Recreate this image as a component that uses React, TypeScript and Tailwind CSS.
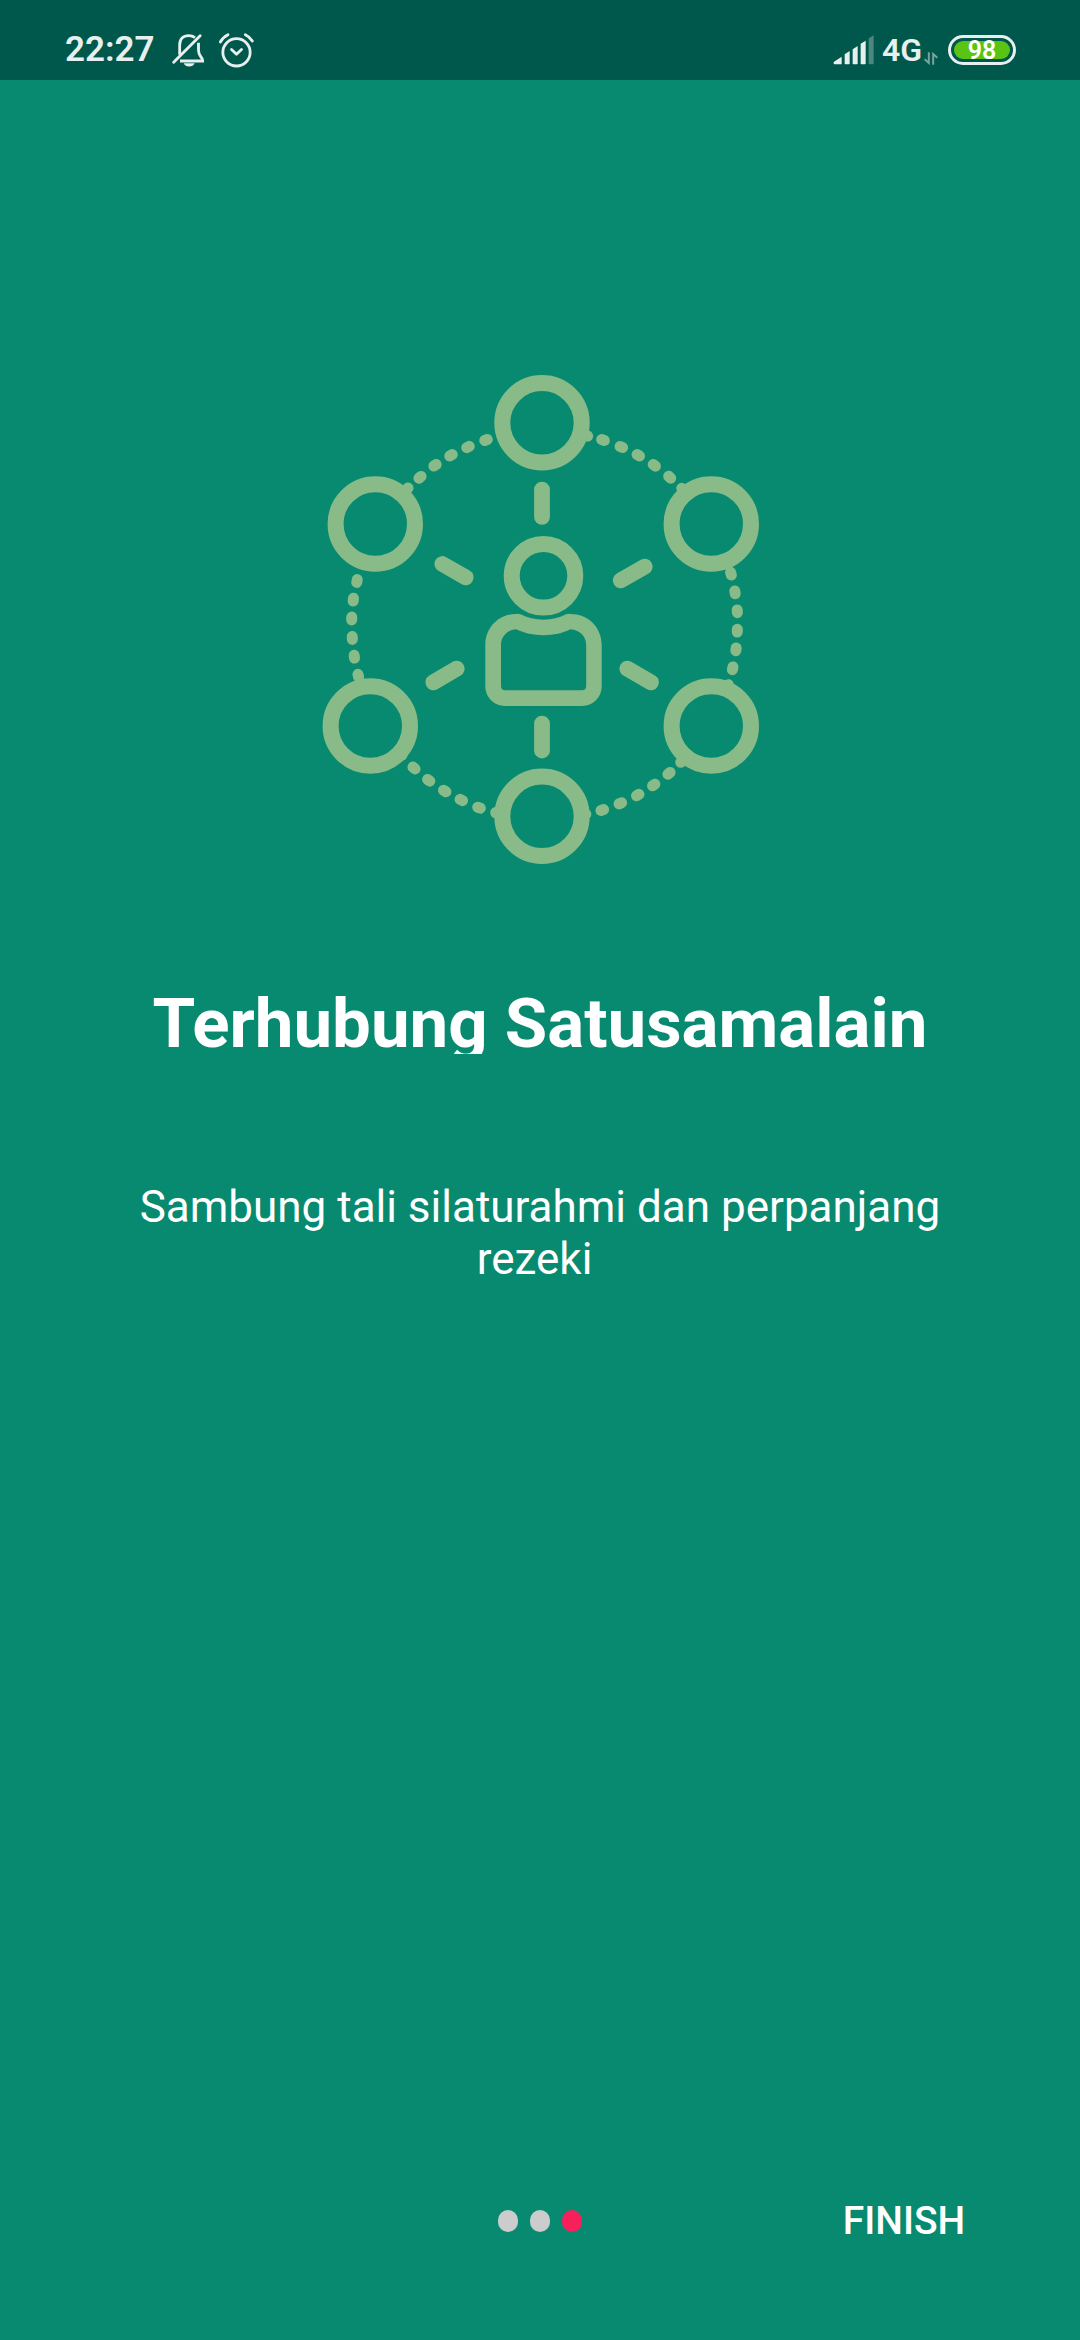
import React from "react";

type Dash = [x: number, y: number, angle: number];

const NODES: [number, number][] = [
  [542, 422.8],
  [375.3, 524],
  [711.3, 524],
  [370.3, 726],
  [711.3, 726],
  [542, 816.3],
];

const SPOKES: [number, number, number, number][] = [
  [542, 489.7, 542, 516.8],
  [542, 723.7, 542, 750.5],
  [442.3, 564, 465.7, 577.3],
  [620.7, 580.3, 644.7, 566.7],
  [433.3, 682.3, 456.7, 668.7],
  [627.3, 668.7, 651, 682.3],
];

const DASHES: Dash[] = [
  [486, 440, -20], [468, 447, -26], [451, 455.3, -30], [435, 465.3, -35], [420, 477.3, -40], [407, 489, -43],
  [586.3, 435.7, 17], [603, 440, 18], [621.3, 447, 24], [638.3, 455.3, 30], [654.3, 465.3, 37], [669.7, 477.3, 43], [682.7, 489.3, 45],
  [731, 573.7, 75], [735, 592.3, 81], [737.3, 611.3, 86], [737.3, 630.7, 91], [736, 649.3, 97], [732.7, 668.3, 102], [728, 686, 105],
  [681.7, 761.3, -45], [669, 773.3, -40], [653.7, 785, -35], [637.7, 795, -30], [620.3, 803.3, -24], [602.3, 810, -18], [584.5, 814.5, -14],
  [357, 581, 100], [353.3, 599.7, 96], [351.7, 618.5, 91], [352.3, 638, 87], [354.3, 656.7, 83], [358.3, 675.7, 77],
  [401, 754, 45], [414, 768, 41], [428.7, 780.3, 36], [444.7, 791, 32], [461.3, 800, 26], [479, 807.7, 20], [497, 813, 15],
];

function NetworkIllustration() {
  return (
    <svg viewBox="318 370 444 500" className="h-[500px] w-[444px]" fill="none" stroke="#88BB88" role="img" aria-label="Terhubung">
      {NODES.map(([x, y]) => (
        <circle key={`${x}-${y}`} cx={x} cy={y} r="39.7" strokeWidth="16" />
      ))}
      {SPOKES.map(([x1, y1, x2, y2]) => (
        <line key={`${x1}-${y1}`} x1={x1} y1={y1} x2={x2} y2={y2} strokeWidth="15.8" strokeLinecap="round" />
      ))}
      {DASHES.map(([x, y, a]) => (
        <line key={`${x}-${y}`} x1={x - 1.4} x2={x + 1.4} y1={y} y2={y} transform={`rotate(${a} ${x} ${y})`} strokeWidth="11" strokeLinecap="round" />
      ))}
      <circle cx="543.5" cy="575.8" r="31.8" strokeWidth="16" />
      <path
        stroke="none"
        fill="#88BB88"
        fillRule="evenodd"
        d="M485.3 645C485.3 627 499 613.9 516 613.9Q519 613.6 521 614.6C528 618 535 619.7 543.5 619.7C552 619.7 559 618 565.5 614.6Q567.5 613.6 570.5 613.9C588 613.9 601.7 627 601.7 645V686.5A19.5 19.5 0 0 1 582.2 706H504.8A19.5 19.5 0 0 1 485.3 686.5ZM501 645C501 636.5 507.5 629.7 516.3 629.3C525 633.3 533 635.2 543.5 635.2C554 635.2 562 633.3 570.5 629.3C579.5 629.7 586.2 636.5 586.2 645V686Q586.2 690.2 582 690.2H505.2Q501 690.2 501 686Z"
      />
    </svg>
  );
}

function MutedBellIcon() {
  return (
    <svg viewBox="390 95 105 111" className="h-[37px] w-[35px]" fill="none" stroke="currentColor" strokeWidth="8.5" aria-hidden="true">
      <path d="M416 163V134C416 116 427 106 443 106Q454 106 462 112" />
      <path d="M398 185.5L477.5 106" strokeLinecap="round" />
      <path d="M472.5 127V150Q473 160 478 167Q485 175 485 182H417" />
      <path d="M428 189H461Q456 198.5 444.5 198.5Q433 198.5 428 189Z" fill="currentColor" stroke="none" />
    </svg>
  );
}

function AlarmIcon() {
  return (
    <svg viewBox="535 95 111 111" className="size-[37px]" fill="none" stroke="currentColor" strokeWidth="8.5" strokeLinecap="round" strokeLinejoin="round" aria-hidden="true">
      <circle cx="590.5" cy="156" r="41" />
      <path d="M575.5 147.5L590.5 161.5L605.5 147.5" />
      <path d="M542 125Q549 111 565 103M617 103Q630 109 638 122" />
    </svg>
  );
}

function SignalIcon() {
  return (
    <svg viewBox="70 100 123 90" className="h-[30px] w-[41px]" fill="currentColor" aria-hidden="true">
      <path d="M72 181L96 165V188H75Q72 188 72 185ZM105 158L120 148V186L118 188H107L105 186ZM129 143L144 133V186L142 188H131L129 186ZM153 126L168 117V186L166 188H155L153 186Z" />
      <path d="M177 110L192 101V186L190 188H179L177 186Z" opacity="0.32" />
    </svg>
  );
}

function DataArrowsIcon() {
  return (
    <svg viewBox="344 149 42 39" className="h-[13px] w-[14px]" fill="none" stroke="currentColor" strokeWidth="6" opacity="0.5" aria-hidden="true">
      <path d="M358.5 150V182L346 171M371.5 187V155L384 166" />
    </svg>
  );
}

function StatusBar() {
  return (
    <header className="flex h-20 items-center justify-between bg-[#00574B] pt-5 pr-16 pl-[65px] text-[#E7F0EE]">
      <div className="flex items-center">
        <time className="text-[35px] leading-10 font-semibold">22:27</time>
        <span className="ml-4">
          <MutedBellIcon />
        </span>
        <span className="ml-3">
          <AlarmIcon />
        </span>
      </div>
      <div className="flex items-center">
        <SignalIcon />
        <span className="ml-2 text-[32px] leading-10 font-semibold">4G</span>
        <span className="mt-4 ml-0.5">
          <DataArrowsIcon />
        </span>
        <span className="ml-2.5 flex h-[30px] w-17 rounded-full border-3 border-current p-[3px]">
          <span className="flex flex-1 items-center justify-center rounded-full bg-[#5AC414] text-[25px] leading-none font-semibold text-white">98</span>
        </span>
      </div>
    </header>
  );
}

export default function App() {
  return (
    <div className="flex min-h-screen flex-col bg-[#088A70] font-[Roboto,sans-serif] text-white">
      <StatusBar />
      <main className="flex flex-1 flex-col items-center px-24 pt-[290px] text-center">
        <NetworkIllustration />
        <h1 className="mt-28 h-[72px] overflow-hidden text-[69px] leading-[84px] font-bold whitespace-nowrap">Terhubung Satusamalain</h1>
        <p className="mt-[127px] text-[44px] leading-[52px]">Sambung tali silaturahmi dan perpanjang rezeki&nbsp;</p>
      </main>
      <footer className="grid grid-cols-3 items-center pb-[88px]">
        <nav aria-label="Halaman" className="col-start-2 flex justify-center gap-3">
          <button aria-label="Halaman 1" className="h-[22px] w-5 rounded-[10px] bg-[#CCCCCC]" />
          <button aria-label="Halaman 2" className="h-[22px] w-5 rounded-[10px] bg-[#CCCCCC]" />
          <button aria-label="Halaman 3" aria-current="page" className="h-[22px] w-5 rounded-[10px] bg-[#F7205B]" />
        </nav>
        <button className="justify-self-center pl-2 text-[39px] leading-[62px] font-medium">FINISH</button>
      </footer>
    </div>
  );
}
